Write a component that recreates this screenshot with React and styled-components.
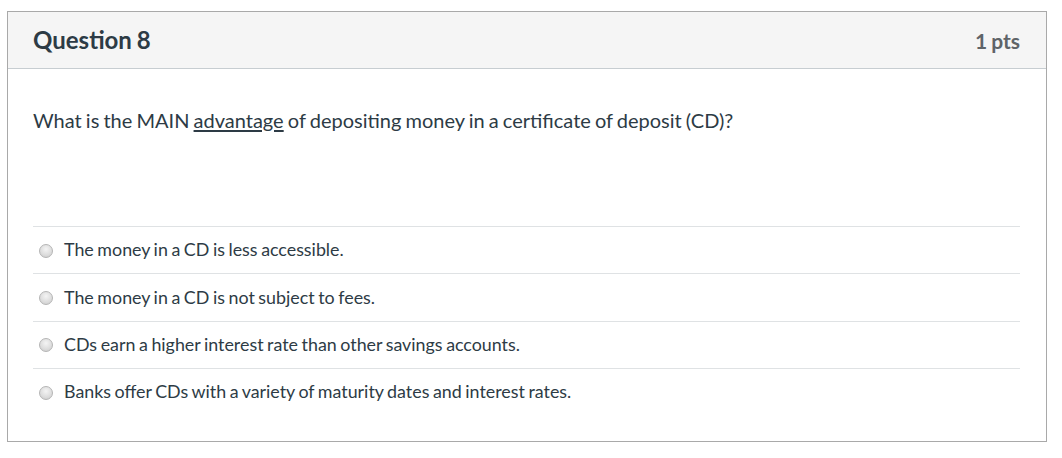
import React from "react";
import styled, { createGlobalStyle } from "styled-components";

const GlobalStyle = createGlobalStyle`
  body {
    margin: 0;
    background: #fff;
    font-family: Lato, "Liberation Sans", sans-serif;
  }
`;

const options = [
  "The money in a CD is less accessible.",
  "The money in a CD is not subject to fees.",
  "CDs earn a higher interest rate than other savings accounts.",
  "Banks offer CDs with a variety of maturity dates and interest rates.",
];

const App = () => {
  return (
    <Page>
      <GlobalStyle />
      <Card>
        <Header>
          <Title>Question 8</Title>
          <Points>1 pts</Points>
        </Header>
        <Body>
          <QuestionText>
            What is the MAIN <u>advantage</u> of depositing money in a
            certificate of deposit (CD)?
          </QuestionText>
          <Answers>
            {options.map((text, i) => (
              <Answer key={i}>
                <Radio />
                <AnswerText>{text}</AnswerText>
              </Answer>
            ))}
          </Answers>
        </Body>
      </Card>
    </Page>
  );
};

export default App;

const Page = styled.div`
  padding: 11px 15px 0 7px;
`;

const Card = styled.div`
  border: 1px solid #a9a9a9;
  width: 1040px;
  box-sizing: border-box;
`;

const Header = styled.div`
  display: flex;
  align-items: center;
  justify-content: space-between;
  height: 57px;
  box-sizing: border-box;
  padding: 0 26px 0 25px;
  background: #f5f5f5;
  border-bottom: 1px solid #c7cdd1;
`;

const Title = styled.div`
  font-size: 24px;
  font-weight: 700;
  color: #2d3b45;
  margin-top: -1px;
  word-spacing: -1px;
`;

const Points = styled.div`
  font-size: 21px;
  font-weight: 700;
  color: #5f6468;
  margin-top: 1px;
  word-spacing: -1px;
`;

const Body = styled.div`
  padding: 37px 26px 25px 25px;
`;

const QuestionText = styled.div`
  font-size: 20px;
  line-height: 28px;
  color: #2d3b45;
  margin-bottom: 92px;
  word-spacing: -1px;

  u {
    text-underline-offset: 2px;
  }
`;

const Answers = styled.div`
  display: flex;
  flex-direction: column;
`;

const Answer = styled.div`
  display: flex;
  align-items: center;
  height: 47.4px;
  box-sizing: border-box;
  border-top: 1px solid #dfe2e4;
  padding-left: 6px;
  padding-bottom: 2px;
`;

const Radio = styled.span`
  width: 14px;
  height: 14px;
  border-radius: 50%;
  box-sizing: border-box;
  border: 1px solid #b5b5b5;
  background: radial-gradient(circle at 50% 35%, #f4f4f4 0%, #dcdcdc 60%, #c8c8c8 100%);
  margin-right: 11px;
  margin-top: 3px;
  flex: none;
`;

const AnswerText = styled.span`
  font-size: 17.85px;
  color: #2d3b45;
  word-spacing: -1px;
`;
